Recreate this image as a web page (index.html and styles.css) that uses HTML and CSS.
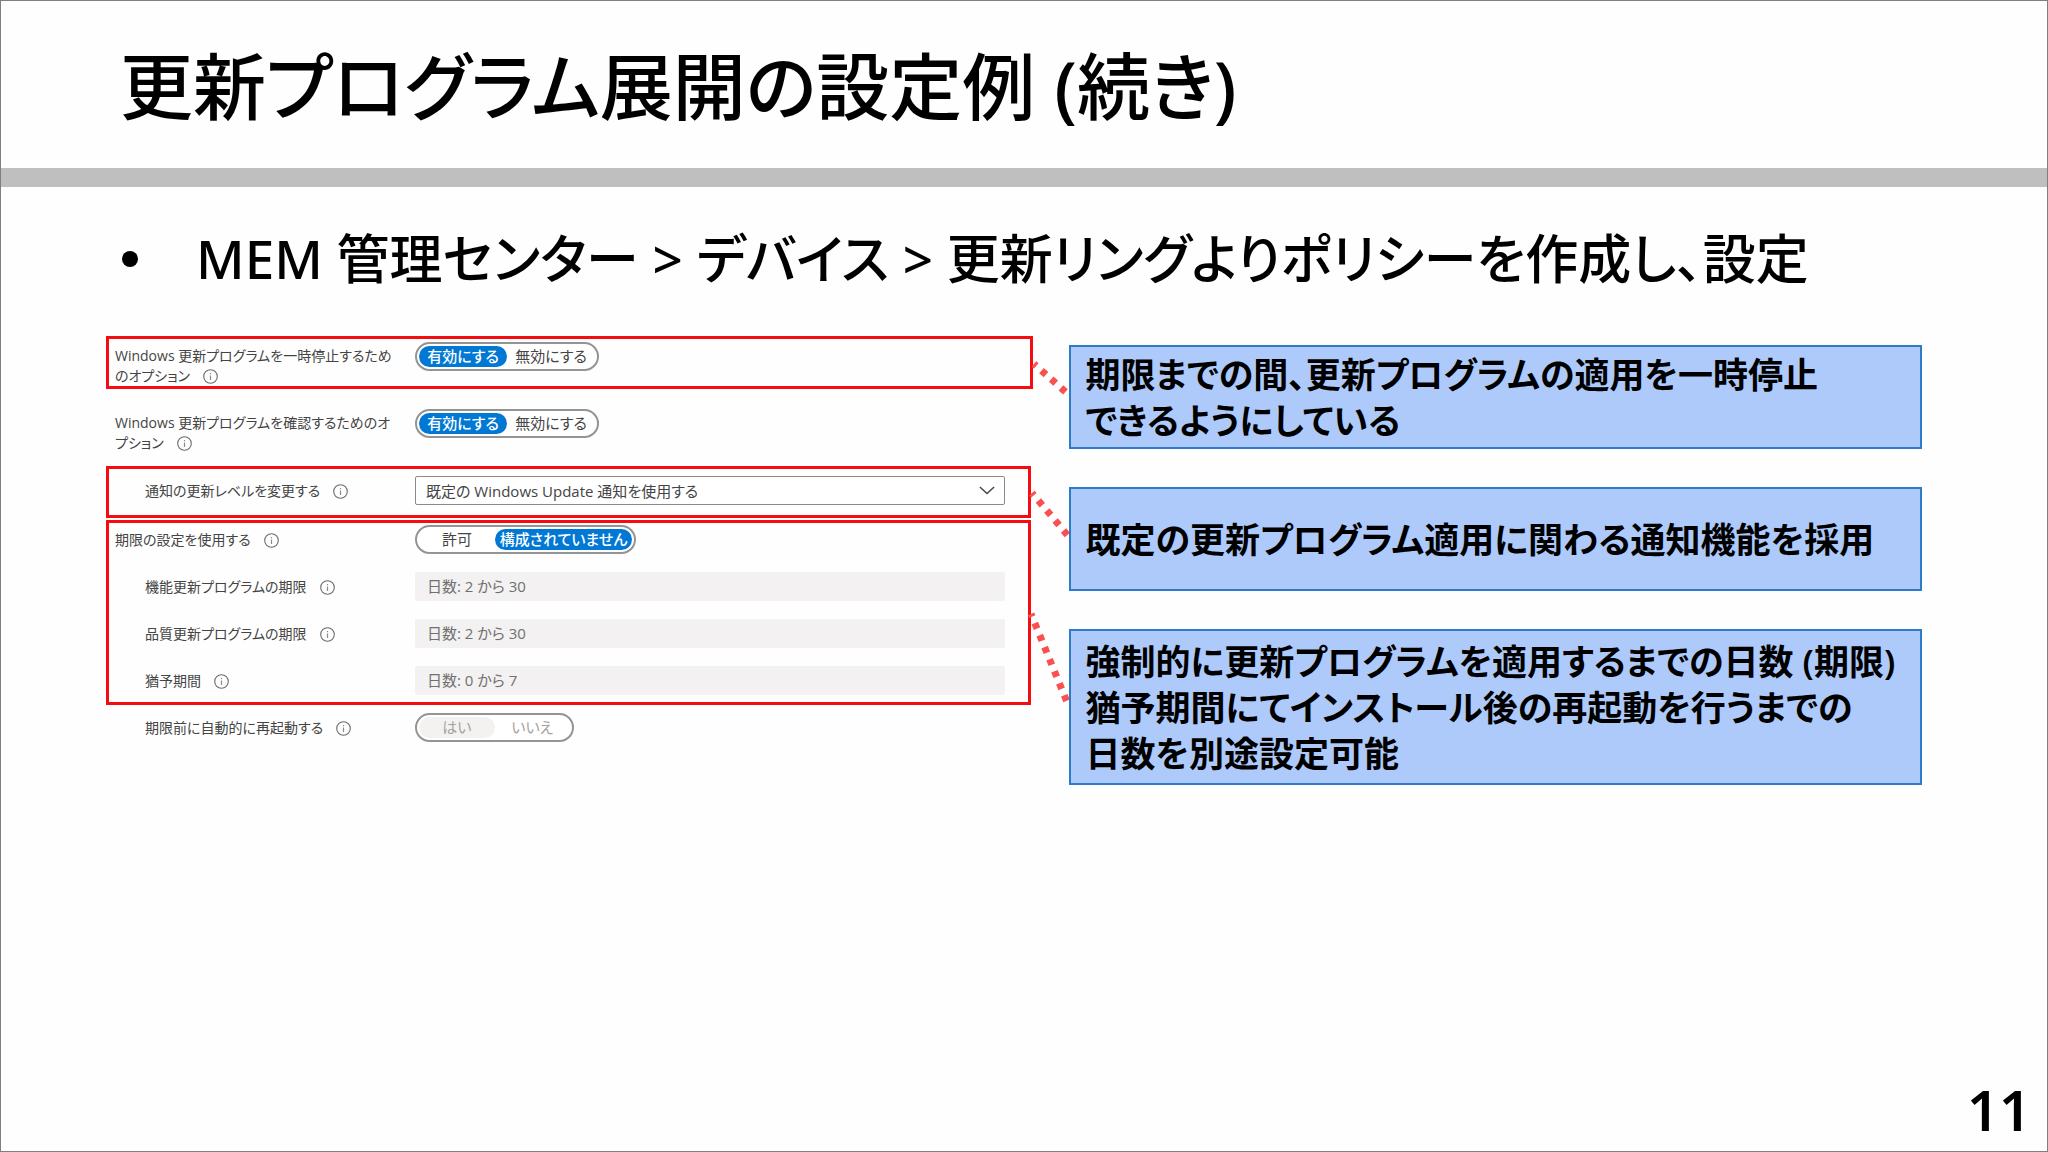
FILE: index.html
```html
<!DOCTYPE html>
<html lang="ja">
<head>
<meta charset="utf-8">
<meta name="viewport" content="width=device-width, initial-scale=1">
<title>更新プログラム展開の設定例 (続き)</title>
<link rel="stylesheet" href="styles.css">
</head>
<body>
<svg class="defs" aria-hidden="true">
  <symbol id="info" viewBox="0 0 15 15">
    <circle cx="7.5" cy="7.5" r="6.8" fill="none" stroke="#6b6b6b" stroke-width="1.1"/>
    <path d="M7.5 6.5V11M7.5 4V5.3" fill="none" stroke="#8a8a8a" stroke-width="1.2"/>
  </symbol>
</svg>
<header class="header">
  <h1 class="title">更新プログラム展開の設定例 (続き)</h1>
</header>
<main class="main">
  <ul class="points">
    <li class="point">MEM 管理センター &gt; デバイス &gt; 更新リングよりポリシーを作成し、設定</li>
  </ul>
  <div class="columns">
    <form class="panel">
      <section class="group marked wide">
        <div class="row" role="radiogroup" aria-labelledby="l1">
          <div class="label" id="l1">Windows 更新プログラムを一時停止するため<br>のオプション<svg class="info"><use href="#info"/></svg></div>
          <div class="toggle">
            <label class="option"><input type="radio" name="pause" checked><span>有効にする</span></label>
            <label class="option"><input type="radio" name="pause"><span>無効にする</span></label>
          </div>
        </div>
      </section>
      <section class="group check">
        <div class="row" role="radiogroup" aria-labelledby="l2">
          <div class="label" id="l2">Windows 更新プログラムを確認するためのオ<br>プション<svg class="info"><use href="#info"/></svg></div>
          <div class="toggle">
            <label class="option"><input type="radio" name="scan" checked><span>有効にする</span></label>
            <label class="option"><input type="radio" name="scan"><span>無効にする</span></label>
          </div>
        </div>
      </section>
      <section class="group marked notify">
        <div class="row single">
          <label class="label indent" for="level">通知の更新レベルを変更する<svg class="info"><use href="#info"/></svg></label>
          <div class="picker">
            <select id="level" class="field select"><option>既定の Windows Update 通知を使用する</option></select>
            <svg class="chevron" viewBox="0 0 18 10"><path d="M1 1L9 8.5L17 1" fill="none" stroke="#444" stroke-width="1.6"/></svg>
          </div>
        </div>
      </section>
      <section class="group marked deadline">
        <div class="row single" role="radiogroup" aria-labelledby="l4">
          <div class="label" id="l4">期限の設定を使用する<svg class="info"><use href="#info"/></svg></div>
          <div class="toggle unset">
            <label class="option"><input type="radio" name="deadline"><span>許可</span></label>
            <label class="option"><input type="radio" name="deadline" checked><span>構成されていません</span></label>
          </div>
        </div>
        <div class="row single">
          <label class="label indent" for="feature">機能更新プログラムの期限<svg class="info"><use href="#info"/></svg></label>
          <input id="feature" class="field" type="text" placeholder="日数: 2 から 30" disabled>
        </div>
        <div class="row single">
          <label class="label indent" for="quality">品質更新プログラムの期限<svg class="info"><use href="#info"/></svg></label>
          <input id="quality" class="field" type="text" placeholder="日数: 2 から 30" disabled>
        </div>
        <div class="row single">
          <label class="label indent" for="grace">猶予期間<svg class="info"><use href="#info"/></svg></label>
          <input id="grace" class="field" type="text" placeholder="日数: 0 から 7" disabled>
        </div>
      </section>
      <section class="group restart">
        <div class="row single" role="radiogroup" aria-labelledby="l8">
          <div class="label indent" id="l8">期限前に自動的に再起動する<svg class="info"><use href="#info"/></svg></div>
          <div class="toggle reboot">
            <label class="option"><input type="radio" name="restart" checked disabled><span>はい</span></label>
            <label class="option"><input type="radio" name="restart" disabled><span>いいえ</span></label>
          </div>
        </div>
      </section>
    </form>
    <svg class="connectors" viewBox="0 0 36 450" aria-hidden="true">
      <g fill="none" stroke="#fa5050" stroke-width="7" stroke-dasharray="6 7" stroke-dashoffset="3">
        <path d="M1 28L36 59"/>
        <path d="M-1 157L36 201"/>
        <path d="M-2 278L36 371"/>
      </g>
    </svg>
    <div class="notes">
      <p class="note">期限までの間、更新プログラムの適用を一時停止<br>できるようにしている</p>
      <p class="note">既定の更新プログラム適用に関わる通知機能を採用</p>
      <p class="note tall">強制的に更新プログラムを適用するまでの日数 (期限)<br>猶予期間にてインストール後の再起動を行うまでの<br>日数を別途設定可能</p>
    </div>
  </div>
</main>
<footer class="footer">11</footer>
</body>
</html>
```
FILE: styles.css
```css
* {
  box-sizing: border-box;
}

body {
  margin: 0;
  min-height: 100vh;
  display: flex;
  flex-direction: column;
  border: 1px solid #7f7f7f;
  background: #fefefe;
  color: #000;
  font-family: "Noto Sans", "Noto Sans CJK JP", sans-serif;
  font-feature-settings: "palt";
}

.defs {
  display: none;
}

.header {
  height: 186px;
  margin: 0 -1px;
  padding: 2px 120px 0;
  display: flex;
  align-items: center;
  border-bottom: 19px solid #bfbfbf;
}

.title {
  margin: 0;
  font-size: 73px;
  line-height: 96px;
  font-weight: 500;
}

.main {
  padding: 0 125px 0 105px;
}

.points {
  margin: 0;
  padding: 30px 0 35px;
  list-style: none;
}

.point {
  display: flex;
  align-items: center;
  gap: 58px;
  padding-left: 16px;
  font-size: 53px;
  line-height: 84px;
  font-weight: 500;
}

.point::before {
  content: "";
  flex: none;
  width: 16px;
  height: 16px;
  border-radius: 50%;
  background: #000;
}

.columns {
  display: grid;
  grid-template-columns: 928fr 36fr 853fr;
  align-items: start;
}

/* Settings panel */

.panel {
  font-family: "Open Sans", "Noto Sans CJK JP", sans-serif;
  font-size: 15px;
  line-height: 20px;
  color: #444;
}

.group {
  margin-right: 2px;
  padding: 0 23px 0 6px;
  border: 3px solid transparent;
}

.marked {
  border-color: #f40c10;
}

.wide {
  margin-right: 0;
}

.check {
  margin: 14px 0 10px;
}

.notify {
  padding-top: 7px;
  padding-bottom: 10px;
  margin-bottom: 2px;
}

.deadline {
  display: grid;
  gap: 18px;
  padding-top: 2px;
  padding-bottom: 7px;
}

.restart {
  padding-top: 5px;
}

.row {
  display: flex;
  align-items: flex-start;
}

.label {
  flex: none;
  width: 300px;
  padding-top: 7px;
  font-size: 14px;
  white-space: nowrap;
}

.single {
  align-items: center;
}

.single .label {
  padding-top: 0;
}

.row .indent {
  padding-left: 30px;
}

.info {
  width: 15px;
  height: 15px;
  margin-left: 13px;
  vertical-align: -3px;
}

.toggle {
  display: flex;
  width: 184px;
  height: 29px;
  margin-top: 3px;
  padding: 2px;
  border: 2px solid #949494;
  border-radius: 15px;
  background: #fff;
}

.single .toggle {
  margin-top: 0;
}

.option {
  flex: 1;
  position: relative;
  display: flex;
}

.option input {
  position: absolute;
  inset: 0;
  margin: 0;
  opacity: 0;
}

.option span {
  flex: 1;
  border-radius: 11px;
  line-height: 21px;
  text-align: center;
}

.option input:checked + span {
  background: #0078d4;
  color: #fff;
  font-weight: 500;
}

.unset {
  width: 221px;
}

.unset .option:last-child {
  flex: none;
  width: 137px;
}

.reboot {
  width: 159px;
}

.reboot .option input + span {
  color: #a3a3a3;
  font-weight: 400;
}

.reboot .option input:checked + span {
  background: #f3f2f1;
}

.field {
  flex: 1;
  min-width: 0;
  width: 100%;
  height: 29px;
  padding: 0 12px 2px;
  border: 0;
  border-radius: 2px;
  background: #f3f1f1;
  color: #444;
  font: inherit;
  font-feature-settings: inherit;
}

.field::placeholder {
  color: #707070;
  opacity: 1;
}

.picker {
  flex: 1;
  position: relative;
}

.select {
  display: block;
  appearance: none;
  padding: 0 10px;
  border: 1px solid #8a8a8a;
  background: #fff;
}

.chevron {
  position: absolute;
  right: 10px;
  top: 10px;
  width: 16px;
  height: 9px;
  pointer-events: none;
}

/* Callouts */

.connectors {
  width: 100%;
  overflow: visible;
}

.notes {
  display: grid;
  gap: 38px;
  padding-top: 9px;
}

.note {
  display: grid;
  align-content: center;
  justify-content: start;
  min-height: 104px;
  margin: 0;
  padding: 2px 14px 0;
  border: 2px solid #2e7cc8;
  background: #adcafb;
  font-size: 35px;
  line-height: 46px;
  font-weight: 600;
  white-space: nowrap;
}

.tall {
  min-height: 156px;
}

.footer {
  margin-top: auto;
  padding: 0 16px 12px;
  text-align: right;
  font-size: 56px;
  line-height: 60px;
  font-weight: 600;
}
```
